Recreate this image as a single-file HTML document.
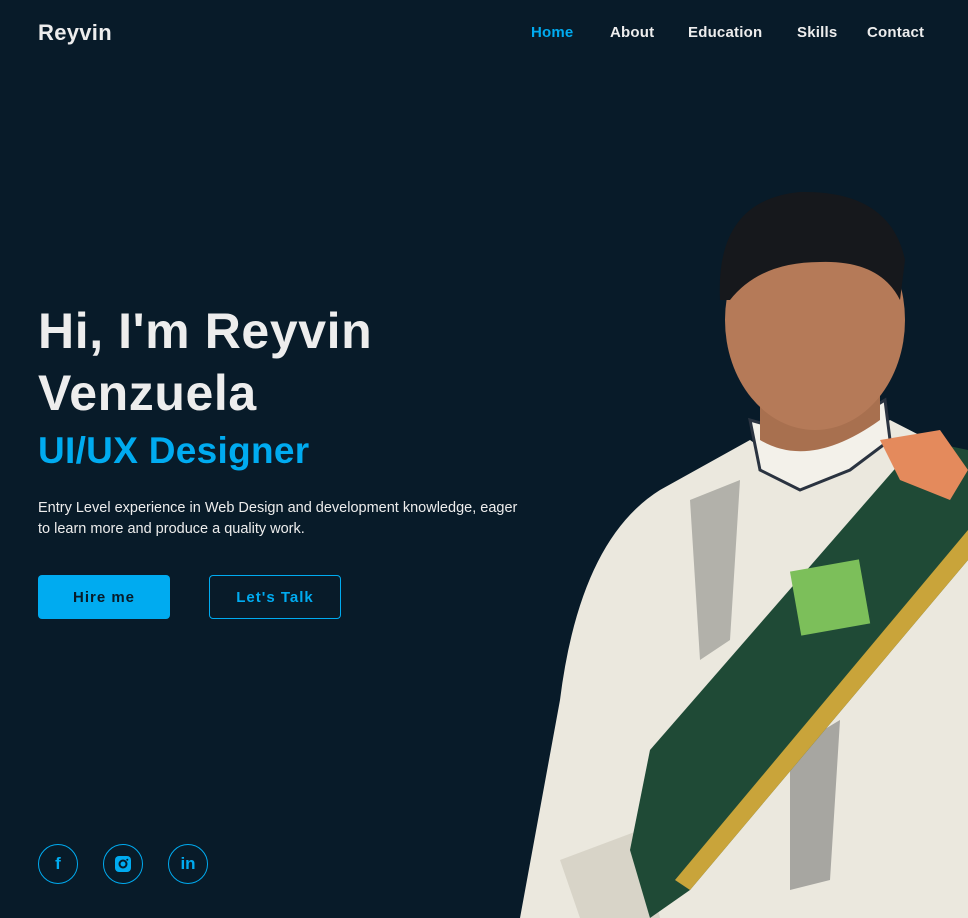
<!DOCTYPE html>
<html><head><meta charset="utf-8"><style>
*{margin:0;padding:0;box-sizing:border-box}
body{width:968px;height:918px;background:#081b29;overflow:hidden;font-family:"Liberation Sans",sans-serif;color:#ededed;position:relative}
.logo{position:absolute;left:38px;top:20px;font-size:22px;font-weight:bold;color:#ededed;letter-spacing:0.3px}
nav{position:absolute;top:24px;left:531px;font-size:15px;font-weight:bold;letter-spacing:0.2px}
nav span{position:absolute;white-space:nowrap}
h1{position:absolute;left:38px;top:300px;font-size:50px;line-height:62px;font-weight:bold;color:#ededed;letter-spacing:0.6px}
h2{position:absolute;left:38px;top:430px;font-size:37px;font-weight:bold;color:#00abf0;letter-spacing:0.3px}
p{position:absolute;left:38px;top:498px;width:525px;font-size:14.5px;line-height:21px;color:#ededed}
.btn{position:absolute;top:575px;width:132px;height:44px;border-radius:4px;font-size:15px;font-weight:bold;letter-spacing:1px;display:flex;align-items:center;justify-content:center}
.b1{left:38px;background:#00abf0;color:#081b29}
.b2{left:209px;border:1.5px solid #00abf0;color:#00abf0}
.soc{position:absolute;top:844px;width:40px;height:40px;border:1.5px solid #00abf0;border-radius:50%;display:flex;align-items:center;justify-content:center;color:#00abf0;font-weight:bold;font-size:17px}
svg.p{position:absolute;left:0;top:0}
</style></head><body>
<svg class="p" width="968" height="918">
<path d="M520 918 L560 700 Q580 540 660 490 L750 440 Q790 470 830 460 L890 420 L968 460 L968 918 Z" fill="#ebe8de"/>
<path d="M690 500 L740 480 L730 640 L700 660Z" fill="#9a9a94" opacity=".7"/>
<path d="M790 750 L840 720 L830 880 L790 890Z" fill="#7a7a78" opacity=".6"/>
<path d="M560 860 L640 830 L660 918 L580 918Z" fill="#d8d4c8"/>
<path d="M750 420 L760 470 L800 490 L850 470 L890 440 L885 400 L820 440 Z" fill="#f3f1ea" stroke="#2a3340" stroke-width="3"/>
<path d="M760 390 L760 440 Q810 470 880 420 L880 380Z" fill="#a8704f"/>
<ellipse cx="815" cy="320" rx="90" ry="110" fill="#b57a58"/>
<path d="M720 300 Q715 200 800 192 Q890 190 905 260 L900 300 Q880 260 820 262 Q760 262 730 300 Z" fill="#16181c"/>
<path d="M968 450 L968 560 L690 890 L650 918 L630 850 L650 750 L920 440 Z" fill="#1f4a36"/>
<path d="M968 530 L968 560 L690 890 L675 880 Z" fill="#c9a43a"/>
<path d="M880 440 L940 430 L968 470 L950 500 L900 480Z" fill="#e48a5c"/>
<rect x="795" y="565" width="70" height="65" fill="#7cbf5a" transform="rotate(-10 830 597)"/>
</svg>
<div class="logo">Reyvin</div>
<nav><span style="left:0;color:#00abf0">Home</span><span style="left:79px">About</span><span style="left:157px">Education</span><span style="left:266px">Skills</span><span style="left:336px">Contact</span></nav>
<h1>Hi, I'm Reyvin<br>Venzuela</h1>
<h2>UI/UX Designer</h2>
<p>Entry Level experience in Web Design and development knowledge, eager<br>to learn more and produce a quality work.</p>
<div class="btn b1">Hire me</div>
<div class="btn b2">Let's Talk</div>
<div class="soc" style="left:38px">f</div>
<div class="soc" style="left:103px"><svg width="16" height="16"><rect x="0" y="0" width="16" height="16" rx="4" fill="#00abf0"/><circle cx="8" cy="8" r="3.5" fill="none" stroke="#081b29" stroke-width="2"/><circle cx="12.3" cy="3.7" r="1" fill="#081b29"/></svg></div>
<div class="soc" style="left:168px">in</div>
</body></html>
